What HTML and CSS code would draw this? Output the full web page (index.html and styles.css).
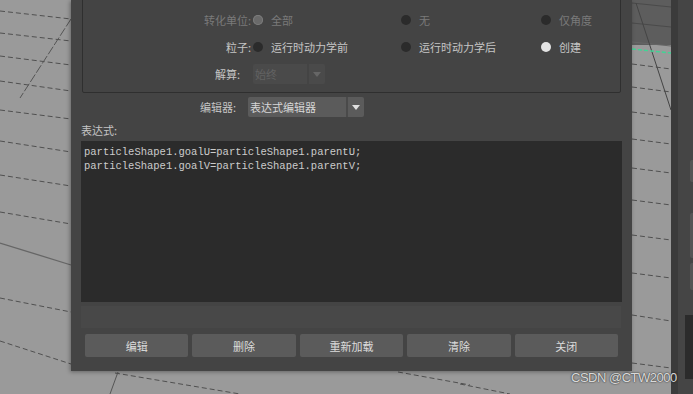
FILE: index.html
```html
<!DOCTYPE html>
<html>
<head>
<meta charset="utf-8">
<link rel="stylesheet" href="styles.css">
</head>
<body>
<div class="stage">
  <svg class="viewport" width="693" height="394" viewBox="0 0 693 394">
    <rect x="0" y="0" width="693" height="394" fill="#9a9a9a"/>
    <rect x="632" y="0" width="40" height="45" fill="#5d5d5d"/>
    <g stroke="#505050" stroke-width="1" stroke-dasharray="5 3" fill="none">
      <line x1="0" y1="11" x2="71" y2="19"/>
      <line x1="0" y1="33" x2="71" y2="41"/>
      <line x1="0" y1="56" x2="71" y2="65"/>
      <line x1="0" y1="81" x2="71" y2="91"/>
      <line x1="0" y1="110" x2="71" y2="119"/>
      <line x1="0" y1="141" x2="71" y2="152"/>
      <line x1="0" y1="175" x2="71" y2="186"/>
      <line x1="0" y1="212" x2="71" y2="224"/>
      <line x1="0" y1="298" x2="71" y2="312"/>
      <line x1="0" y1="341" x2="71" y2="364"/>
      <line x1="115" y1="373" x2="240" y2="394"/>
      <line x1="398" y1="372" x2="470" y2="385"/>
      <line x1="460" y1="384" x2="510" y2="394"/>
      <line x1="632" y1="64" x2="671" y2="69"/>
      <line x1="632" y1="87" x2="671" y2="92"/>
      <line x1="632" y1="112" x2="671" y2="117"/>
      <line x1="632" y1="139" x2="671" y2="144"/>
      <line x1="632" y1="168" x2="671" y2="173"/>
      <line x1="632" y1="200" x2="671" y2="205"/>
      <line x1="632" y1="235" x2="671" y2="240"/>
      <line x1="632" y1="273" x2="671" y2="278"/>
      <line x1="632" y1="315" x2="671" y2="321"/>
      <line x1="632" y1="363" x2="671" y2="368"/>
    </g>
    <g stroke="#555" stroke-width="1" fill="none">
      <line x1="0" y1="243" x2="71" y2="265" stroke="#666" stroke-width="1.3"/>
      <line x1="71" y1="19" x2="20" y2="98" stroke-dasharray="9 2"/>
      <line x1="118" y1="372" x2="110" y2="394"/>
      <line x1="632" y1="3" x2="671" y2="7" stroke="#4a4a4a"/>
      <line x1="632" y1="23" x2="671" y2="27" stroke="#4a4a4a"/>
      <line x1="632" y1="42" x2="671" y2="46" stroke="#666"/>
      <line x1="636" y1="3" x2="671" y2="110" stroke="#444"/>
    </g>
    <line x1="632" y1="49" x2="671" y2="53" stroke="#3fd595" stroke-width="1.4" stroke-dasharray="4 2"/>
  </svg>

  <div class="dialog">
    <div class="group">
      <div class="row">
        <span class="label dim">转化单位:</span>
        <span class="opt"><i class="radio half"></i><span class="dim">全部</span></span>
        <span class="opt"><i class="radio"></i><span class="dim">无</span></span>
        <span class="opt"><i class="radio"></i><span class="dim">仅角度</span></span>
      </div>
      <div class="row">
        <span class="label">粒子:</span>
        <span class="opt"><i class="radio"></i><span>运行时动力学前</span></span>
        <span class="opt"><i class="radio"></i><span>运行时动力学后</span></span>
        <span class="opt"><i class="radio on"></i><span>创建</span></span>
      </div>
      <div class="row">
        <span class="label solve">解算:</span>
        <span class="combo disabled"><span class="combo-text">始终</span><span class="combo-arrow"><i class="tri"></i></span></span>
      </div>
    </div>

    <div class="editor-row">
      <span class="editor-label">编辑器:</span>
      <span class="combo editor"><span class="combo-text">表达式编辑器</span><span class="combo-arrow"><i class="tri"></i></span></span>
    </div>

    <div class="expr-label">表达式:</div>
    <div class="code">particleShape1.goalU=particleShape1.parentU;
particleShape1.goalV=particleShape1.parentV;</div>
    <div class="strip"></div>
    <div class="buttons">
      <button class="btn">编辑</button>
      <button class="btn">删除</button>
      <button class="btn">重新加载</button>
      <button class="btn">清除</button>
      <button class="btn">关闭</button>
    </div>
  </div>

  <div class="side">
    <div class="side-edge"></div>
    <div class="side-body">
      <div class="tab t1"></div>
      <div class="tab t2"></div>
      <div class="tab t3"></div>
      <div class="dark-box"></div>
    </div>
  </div>

  <div class="watermark">CSDN @CTW2000</div>
</div>
</body>
</html>
```

FILE: styles.css
```css
* { box-sizing: border-box; }
html, body { margin: 0; padding: 0; }
body {
  width: 693px;
  height: 394px;
  overflow: hidden;
  background: #9a9a9a;
  font-family: "Noto Sans CJK SC", "Noto Sans", sans-serif;
  font-size: 11px;
  color: #c6c6c6;
}
.stage {
  position: relative;
  width: 693px;
  height: 394px;
  overflow: hidden;
}
.viewport {
  position: absolute;
  left: 0;
  top: 0;
  display: block;
}
.dialog {
  position: absolute;
  left: 71px;
  top: 0;
  width: 561px;
  height: 371px;
  background: #444444;
  box-shadow: -1px 1px 4px rgba(0,0,0,0.35);
  padding: 0 10px;
  display: flex;
  flex-direction: column;
}
.group {
  margin: -4px 1px 0 1px;
  border: 1px solid #2f2f2f;
  border-radius: 2px;
  padding: 10px 0 5px 0;
  display: flex;
  flex-direction: column;
  gap: 1px;
}
.row {
  height: 26px;
  display: grid;
  grid-template-columns: 168px 146px 138px 1fr;
  column-gap: 2px;
  align-items: center;
}
.label {
  text-align: right;
  color: #c4c4c4;
  white-space: nowrap;
}
.label.solve { padding-right: 11px; }
.dim { color: #7a7a7a; }
.opt {
  display: flex;
  align-items: center;
  gap: 8px;
  white-space: nowrap;
}
.radio {
  width: 10px;
  height: 10px;
  border-radius: 50%;
  background: #2b2b2b;
  flex: none;
}
.radio.half {
  background: #6a6a6a;
  box-shadow: inset 0 0 0 1px #7c7c7c;
}
.radio.on {
  background: #e4e4e4;
}
.combo {
  height: 20px;
  display: flex;
  border-radius: 2px;
  background: #5b5b5b;
  overflow: hidden;
}
.combo.disabled {
  width: 72px;
  background: #4a4a4a;
}
.combo-text {
  flex: 1;
  padding-left: 2px;
  line-height: 20px;
  color: #d6d6d6;
  white-space: nowrap;
}
.combo.disabled .combo-text { color: #626262; }
.combo-arrow {
  width: 18px;
  border-left: 2px solid #4a4a4a;
  display: flex;
  align-items: center;
  justify-content: center;
}
.combo.disabled .combo-arrow { border-left-color: #444; }
.tri {
  width: 0;
  height: 0;
  border-left: 4px solid transparent;
  border-right: 4px solid transparent;
  border-top: 5px solid #e0e0e0;
}
.combo.disabled .tri { border-top-color: #666; }

.editor-row {
  margin-top: 4px;
  height: 20px;
  display: grid;
  grid-template-columns: 155px 116px;
  column-gap: 12px;
  align-items: center;
}
.editor-label {
  text-align: right;
  color: #c4c4c4;
}
.combo.editor { width: 116px; }

.expr-label {
  margin-top: 5px;
  height: 16px;
  line-height: 16px;
  color: #c4c4c4;
}
.code {
  margin-top: 3px;
  height: 161px;
  background: #2b2b2b;
  padding: 4px 3px;
  font-family: "Liberation Mono", "DejaVu Sans Mono", monospace;
  font-size: 10.5px;
  line-height: 14px;
  color: #cbcbcb;
  white-space: pre;
}
.strip {
  margin-top: 4px;
  height: 22px;
  margin-right: 1px;
  background: #484848;
}
.buttons {
  margin-top: 6px;
  padding: 0 4px;
  display: flex;
  gap: 4px;
}
.btn {
  flex: 1;
  height: 23px;
  border: none;
  border-radius: 2px;
  background: #5b5b5b;
  color: #dcdcdc;
  font-family: "Noto Sans CJK SC", "Noto Sans", sans-serif;
  font-size: 11px;
  padding: 0;
}

.side {
  position: absolute;
  left: 671px;
  top: 0;
  width: 22px;
  height: 394px;
  display: flex;
}
.side-edge {
  width: 7px;
  background: #3b3b3b;
}
.side-body {
  flex: 1;
  background: #454545;
  position: relative;
}
.tab {
  position: absolute;
  right: 0;
  width: 3px;
  background: #555;
  border-radius: 2px 0 0 2px;
}
.t1 { top: 160px; height: 22px; }
.t2 { top: 213px; height: 45px; }
.t3 { top: 263px; height: 27px; }
.dark-box {
  position: absolute;
  left: 7px;
  right: 0;
  top: 315px;
  height: 64px;
  background: #2b2b2b;
}
.watermark {
  position: absolute;
  left: 571px;
  top: 370px;
  font-family: "Liberation Sans", Arial, sans-serif;
  font-size: 13px;
  letter-spacing: -0.5px;
  color: rgba(255,255,255,0.82);
  text-shadow: 0 0 1px #333, 0 0 2px rgba(0,0,0,0.6);
  white-space: nowrap;
}
```
